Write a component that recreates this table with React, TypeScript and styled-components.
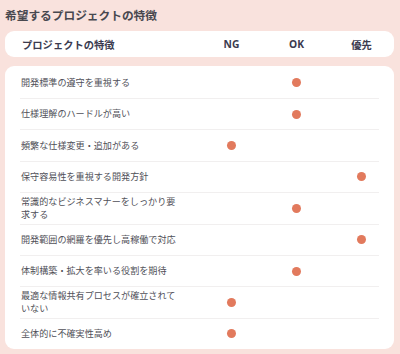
import React from 'react'
import styled, { createGlobalStyle } from 'styled-components'

type Level = 'ng' | 'ok' | 'priority'

interface Feature {
  label: string;
  level: Level;
}

const features: Feature[] = [
  { label: '開発標準の遵守を重視する', level: 'ok' },
  { label: '仕様理解のハードルが高い', level: 'ok' },
  { label: '頻繁な仕様変更・追加がある', level: 'ng' },
  { label: '保守容易性を重視する開発方針', level: 'priority' },
  { label: '常識的なビジネスマナーをしっかり要求する', level: 'ok' },
  { label: '開発範囲の網羅を優先し高稼働で対応', level: 'priority' },
  { label: '体制構築・拡大を率いる役割を期待', level: 'ok' },
  { label: '最適な情報共有プロセスが確立されていない', level: 'ng' },
  { label: '全体的に不確実性高め', level: 'ng' }
]

const levels: Level[] = ['ng', 'ok', 'priority']

const Colors = {
  background: '#f9e2dd',
  white: '#ffffff',
  title: '#48484f',
  header: '#3b3b4f',
  text: '#505058',
  divider: '#f1efef',
  dot: '#e27a5d'
}

const GlobalStyle = createGlobalStyle`
  html, body {
    margin: 0;
    padding: 0;
    background: ${Colors.background};
  }
  body {
    font-family: "Noto Sans", "Noto Sans CJK JP", sans-serif;
  }
`

export default function App() {
  return (
    <Page>
      <GlobalStyle />
      <Title>希望するプロジェクトの特徴</Title>
      <HeaderCard>
        <HeaderLabel>プロジェクトの特徴</HeaderLabel>
        <HeaderCell>NG</HeaderCell>
        <HeaderCell>OK</HeaderCell>
        <HeaderCell>優先</HeaderCell>
      </HeaderCard>
      <BodyCard>
        {features.map((feature, i) => (
          <React.Fragment key={feature.label}>
            {i > 0 && <Divider />}
            <Row>
              <RowLabel>{feature.label}</RowLabel>
              {levels.map(level => (
                <Cell key={level}>{feature.level === level && <Dot />}</Cell>
              ))}
            </Row>
          </React.Fragment>
        ))}
      </BodyCard>
    </Page>
  )
}

const Page = styled.div`
  width: 400px;
  height: 354px;
  box-sizing: border-box;
  padding: 5px 6px 5px 5px;
  display: flex;
  flex-direction: column;
`

const Title = styled.h1`
  margin: 0 0 6px;
  font-size: 11.7px;
  line-height: 20px;
  font-weight: 700;
  color: ${Colors.title};
`

const HeaderCard = styled.div`
  display: grid;
  grid-template-columns: 1fr 65px 65px 65px;
  align-items: center;
  height: 26px;
  padding-left: 17px;
  background: ${Colors.white};
  border-radius: 9px;
  margin-bottom: 9px;
`

const HeaderLabel = styled.div`
  font-size: 10.3px;
  font-weight: 700;
  color: ${Colors.header};
`

const HeaderCell = styled.div`
  text-align: center;
  font-size: 10.3px;
  font-weight: 700;
  color: ${Colors.header};
`

const BodyCard = styled.div`
  flex: 1;
  display: flex;
  flex-direction: column;
  padding-top: 1.5px;
  background: ${Colors.white};
  border-radius: 9px;
  overflow: hidden;
`

const Row = styled.div`
  display: grid;
  grid-template-columns: 1fr 65px 65px 65px;
  align-items: center;
  min-height: 30.5px;
  padding-left: 16px;
`

const RowLabel = styled.div`
  max-width: 160px;
  font-size: 9.1px;
  line-height: 1.5;
  color: ${Colors.text};
`

const Cell = styled.div`
  display: flex;
  justify-content: center;
  align-items: center;
`

const Dot = styled.span`
  width: 9px;
  height: 9px;
  border-radius: 50%;
  background: ${Colors.dot};
`

const Divider = styled.div`
  height: 1px;
  margin: 0 15px;
  background: ${Colors.divider};
`
